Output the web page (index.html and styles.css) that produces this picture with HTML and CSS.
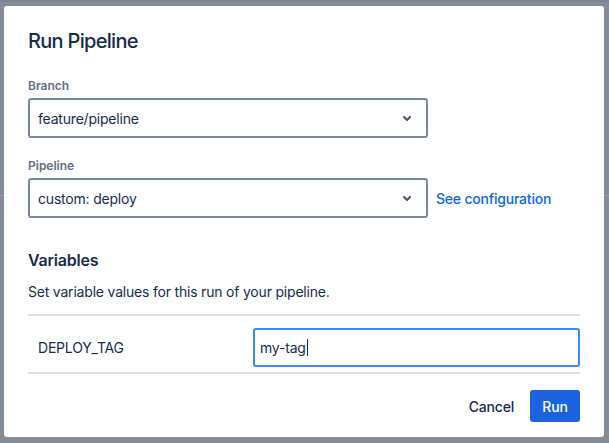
FILE: index.html
```html
<!DOCTYPE html>
<html lang="en">
<head>
<meta charset="utf-8">
<title>Run Pipeline</title>
<link rel="stylesheet" href="styles.css">
</head>
<body>
<div class="backdrop">
  <div class="under-line"></div>
</div>
<div class="dialog" role="dialog" aria-labelledby="dlg-title">
  <h1 class="title" id="dlg-title">Run Pipeline</h1>

  <div class="field field-branch">
    <label class="label">Branch</label>
    <div class="select">
      <span class="select-value">feature/pipeline</span>
      <svg class="chevron" width="24" height="24" viewBox="0 0 24 24" aria-hidden="true"><path d="M8.3 10.3a1 1 0 0 1 1.4 0L12 12.6l2.3-2.3a1 1 0 1 1 1.4 1.4l-3 3a1 1 0 0 1-1.4 0l-3-3a1 1 0 0 1 0-1.4z" fill="#44546f"/></svg>
    </div>
  </div>

  <div class="field field-pipeline">
    <label class="label">Pipeline</label>
    <div class="select-row">
      <div class="select">
        <span class="select-value">custom: deploy</span>
        <svg class="chevron" width="24" height="24" viewBox="0 0 24 24" aria-hidden="true"><path d="M8.3 10.3a1 1 0 0 1 1.4 0L12 12.6l2.3-2.3a1 1 0 1 1 1.4 1.4l-3 3a1 1 0 0 1-1.4 0l-3-3a1 1 0 0 1 0-1.4z" fill="#44546f"/></svg>
      </div>
      <a class="link" href="#">See configuration</a>
    </div>
  </div>

  <h2 class="subtitle">Variables</h2>
  <p class="desc">Set variable values for this run of your pipeline.</p>

  <div class="vars">
    <div class="var-row">
      <div class="var-name">DEPLOY_TAG</div>
      <div class="var-input"><span class="var-text">my-tag</span><span class="caret"></span></div>
    </div>
  </div>

  <div class="footer">
    <button class="btn btn-subtle" type="button">Cancel</button>
    <button class="btn btn-primary" type="button">Run</button>
  </div>
</div>
</body>
</html>
```

FILE: styles.css
```css
html, body {
  margin: 0;
  padding: 0;
}

body {
  background: #878c99;
  font-family: Inter, "Noto Sans", "Liberation Sans", sans-serif;
  color: #172b4d;
  padding: 6px 5px 6px 4px;
  height: 443px;
  box-sizing: border-box;
  overflow: hidden;
  letter-spacing: -0.2px;
}

.backdrop {
  position: fixed;
  inset: 0;
  z-index: 0;
  border-top: 2px solid #7f8491;
}

.under-line {
  position: absolute;
  left: 0;
  right: 0;
  top: 193px;
  height: 1px;
  background: #9ba0ab;
}

.dialog {
  position: relative;
  z-index: 1;
  background: #fff;
  border-radius: 3px;
  width: 600px;
  height: 431px;
  box-sizing: border-box;
  padding: 23px 24px 15px;
  display: flex;
  flex-direction: column;
}

.title {
  margin: 0;
  font-size: 20px;
  line-height: 24px;
  font-weight: 500;
  color: #172b4d;
  letter-spacing: -0.7px;
}

.field {
  display: flex;
  flex-direction: column;
}

.field-branch {
  margin-top: 25px;
}

.field-pipeline {
  margin-top: 20px;
}

.label {
  font-size: 12px;
  line-height: 16px;
  font-weight: 600;
  color: #626f86;
  margin-bottom: 4px;
  letter-spacing: 0;
}

.select-row {
  display: flex;
  align-items: center;
  gap: 8px;
}

.select {
  width: 400px;
  height: 40px;
  box-sizing: border-box;
  border: 2px solid #7a8699;
  border-radius: 3px;
  display: flex;
  align-items: center;
  justify-content: space-between;
  padding: 0 7px 0 8px;
}

.select-value {
  font-size: 14px;
  color: #172b4d;
}

.chevron {
  flex: none;
}

.link {
  font-size: 14px;
  font-weight: 500;
  color: #0c66e4;
  text-decoration: none;
}

.subtitle {
  margin: 32px 0 0;
  font-size: 16px;
  line-height: 20px;
  font-weight: 600;
  color: #172b4d;
}

.desc {
  margin: 12px 0 0;
  font-size: 14px;
  line-height: 20px;
  color: #172b4d;
}

.vars {
  margin-top: 12px;
  border-top: 2px solid #dfe1e6;
  border-bottom: 2px solid #dfe1e6;
  padding: 12px 0 5px;
}

.var-row {
  display: flex;
  align-items: center;
}

.var-name {
  width: 225px;
  padding-left: 10px;
  box-sizing: border-box;
  font-size: 14px;
  color: #172b4d;
}

.var-input {
  flex: 1;
  height: 39px;
  box-sizing: border-box;
  border: 2px solid #388bff;
  border-radius: 3px;
  display: flex;
  align-items: center;
  padding-left: 5px;
  font-size: 14px;
  color: #172b4d;
}

.caret {
  display: inline-block;
  width: 1px;
  height: 17px;
  background: #172b4d;
  margin-left: 1px;
}

.footer {
  margin-top: auto;
  display: flex;
  justify-content: flex-end;
  align-items: center;
  gap: 16px;
}

.btn {
  font-family: inherit;
  font-size: 14px;
  font-weight: 500;
  height: 32px;
  border: none;
  border-radius: 3px;
  cursor: pointer;
  letter-spacing: -0.2px;
}

.btn-subtle {
  background: transparent;
  color: #172b4d;
  padding: 0;
}

.btn-primary {
  background: #1d63e0;
  color: #fff;
  padding: 0 12px;
  width: 50px;
}
```
